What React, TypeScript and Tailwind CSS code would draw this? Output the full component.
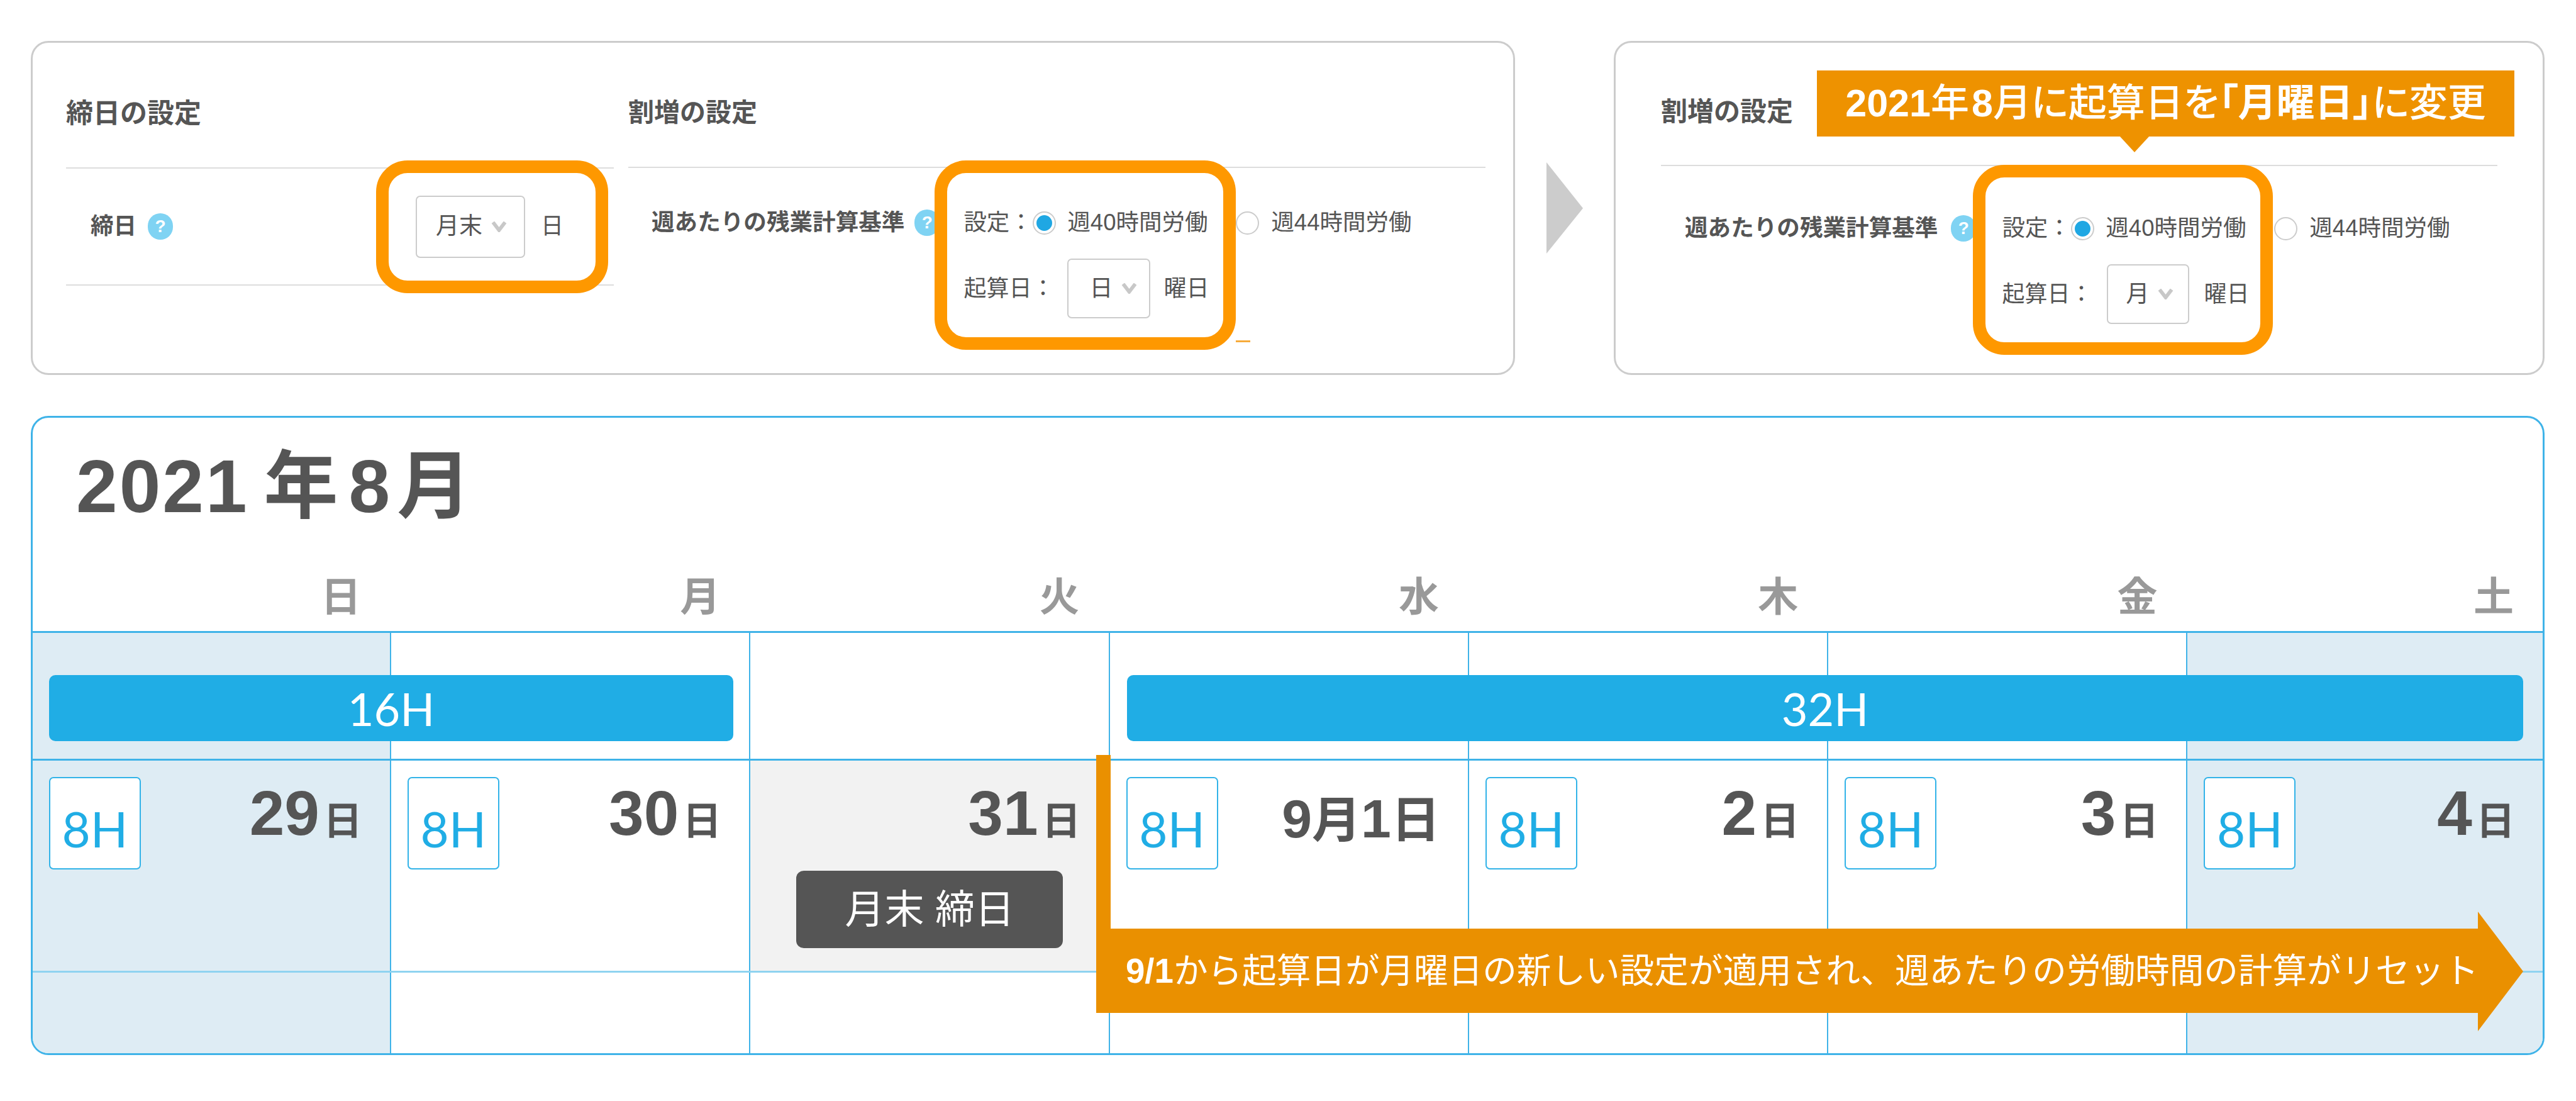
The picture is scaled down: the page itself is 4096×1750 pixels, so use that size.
const FONT = '[font-family:"Liberation_Sans","Noto_Sans_CJK_JP",sans-serif]';

function Help() {
  return (
    <span className="flex h-[42px] w-[40px] shrink-0 items-center justify-center rounded-full bg-[#7fd3f3] text-[28px] font-bold text-white">
      ?
    </span>
  );
}

function Chevron({ className }: { className: string }) {
  return (
    <svg viewBox="0 0 26 17" className={className} fill="none" stroke="#c8c8c8" strokeWidth="6">
      <path d="M3 1 L13 14 L23 1" />
    </svg>
  );
}

function Select({ label, className }: { label: string; className: string }) {
  return (
    <div className={`flex shrink-0 items-center rounded-[7px] border-2 border-[#cccccc] bg-white text-[37px] text-[#555] ${className}`}>
      <span>{label}</span>
      <Chevron className="ml-[14px] h-[17px] w-[25px]" />
    </div>
  );
}

function Radio({ on, className = '' }: { on?: boolean; className?: string }) {
  return (
    <span className={`flex h-[37px] w-[37px] shrink-0 items-center justify-center rounded-full border-2 border-[#cccccc] bg-white ${className}`}>
      {on && <span className="h-[25px] w-[25px] rounded-full bg-[#1fa7e3]" />}
    </span>
  );
}

function Highlight({ className }: { className: string }) {
  return <div className={`absolute rounded-[50px] border-[20px] border-[#fe9800] ${className}`} />;
}

function Overtime({ month, helpGap, labelGap, selectGap, selectClass, afterGap }: { month: string; helpGap: string; labelGap: string; selectGap: string; selectClass: string; afterGap: string }) {
  return (
    <div className="flex">
      <div className="flex h-[38px] items-center">
        <span className="text-[36.6px] font-bold text-[#555]">週あたりの残業計算基準</span>
        <span className={helpGap}><Help /></span>
      </div>
      <div className={labelGap}>
        <div className="flex h-[38px] items-center text-[36.5px] text-[#555]">
          <span className="w-[110px]">設定：</span>
          <Radio on />
          <span className="ml-[18px] w-[268px]">週40時間労働</span>
          <Radio />
          <span className="ml-[19px]">週44時間労働</span>
        </div>
        <div className="mt-[38px] flex items-center text-[36px] text-[#555]">
          <span className={selectGap}>起算日：</span>
          <Select label={month} className={selectClass} />
          <span className={afterGap}>曜日</span>
        </div>
      </div>
    </div>
  );
}

function LeftPanel() {
  return (
    <div className="relative flex h-[531px] w-[2360px] shrink-0 rounded-[28px] border-[3px] border-[#cccccc] pl-[53px]">
      <div className="w-[871px]">
        <div className="flex h-[200px] items-center border-b-2 border-[#dddddd] pt-[27px] text-[43px] font-bold text-[#555]">締日の設定</div>
        <div className="flex h-[186px] items-center border-b-2 border-[#dddddd] pl-[39px]">
          <span className="text-[36.5px] font-bold text-[#555]">締日</span>
          <span className="ml-[18px]"><Help /></span>
          <Select label="月末" className="ml-[386px] h-[99px] w-[174px] pl-[30px]" />
          <span className="ml-[25px] text-[36px] text-[#555]">日</span>
        </div>
      </div>
      <div className="ml-[23px] w-[1363px]">
        <div className="flex h-[199px] items-center border-b-2 border-[#dddddd] pt-[27px] text-[41px] font-bold text-[#555]">割増の設定</div>
        <div className="pl-[37px] pt-[68px]">
          <Overtime month="日" helpGap="ml-[16px]" labelGap="ml-[38px]" selectGap="w-[165px]" selectClass="h-[95px] w-[132px] pl-[33px]" afterGap="ml-[21px]" />
        </div>
      </div>
      <Highlight className="left-[1434px] top-[187px] h-[301px] w-[479px]" />
      <div className="absolute left-[1913px] top-[473px] h-[3px] w-[23px] bg-[#f7ab3a]" />
      <Highlight className="left-[546px] top-[187px] h-[211px] w-[369px]" />
    </div>
  );
}

function RightPanel() {
  return (
    <div className="relative h-[531px] w-[1480px] shrink-0 rounded-[28px] border-[3px] border-[#cccccc] px-[72px]">
      <div className="flex h-[196px] items-center border-b-2 border-[#dddddd] pt-[24px] text-[42px] font-bold text-[#555]">割増の設定</div>
      <div className="pl-[38px] pt-[80px]">
        <Overtime month="月" helpGap="ml-[21px]" labelGap="ml-[41px]" selectGap="w-[167px]" selectClass="h-[95px] w-[131px] pl-[28px]" afterGap="ml-[23px]" />
      </div>
      <div className="absolute left-[320px] top-[44px] flex h-[105px] w-[1109px] items-center justify-center bg-[#ee9200] text-[61px] font-medium text-white [font-feature-settings:'palt']">
        <b className="font-bold">2021</b>年<b className="ml-[4px] font-bold">8</b>月に起算日を<b className="font-bold">「月曜日」</b>に変更
      </div>
      <svg viewBox="0 0 48 26" className="absolute left-[801px] top-[148px] h-[26px] w-[48px]">
        <path d="M0 0 H48 L24 26 Z" fill="#ee9200" />
      </svg>
      <Highlight className="left-[568px] top-[194px] h-[302px] w-[477px]" />
    </div>
  );
}

const DAYS = [
  { n: '29', bg: 'bg-[#deecf4]' },
  { n: '30', bg: 'bg-white' },
  { n: '31', bg: 'bg-[#f2f2f2]' },
  { n: '', bg: 'bg-white' },
  { n: '2', bg: 'bg-white' },
  { n: '3', bg: 'bg-white' },
  { n: '4', bg: 'bg-[#deecf4]' },
];
const WEEK = ['日', '月', '火', '水', '木', '金', '土'];
const COLS = 'grid grid-cols-[568px_repeat(5,571.3px)_1fr]';

function Cell({ i, bg, children, className = '' }: { i: number; bg: string; children?: React.ReactNode; className?: string }) {
  return <div className={`h-full ${i > 0 ? 'border-l-2 border-[#3fb3e8]' : ''} ${bg} ${className}`}>{children}</div>;
}

function Calendar() {
  return (
    <div className="relative mt-[65px] h-[1016px] w-[3997px] overflow-hidden rounded-[28px] border-[3px] border-[#3fb3e8]">
      <div className="h-[339px]">
        <div className="flex h-[190px] items-center pl-[69px] pt-[28px] text-[118px] font-bold tracking-[3px] text-[#555]">
          <span>2021</span>
          <span className="ml-[24px]">年</span>
          <span className="ml-[14px]">8</span>
          <span className="ml-[8px]">月</span>
        </div>
        <div className={`${COLS} h-[149px]`}>
          {WEEK.map((w) => (
            <div key={w} className="flex items-start justify-end pr-[46px] pt-[55px] text-[64px] font-bold leading-[80px] text-[#999]">{w}</div>
          ))}
        </div>
      </div>

      <div className={`${COLS} relative h-[203px] border-t-[3px] border-[#3fb3e8]`}>
        {DAYS.map((d, i) => (
          <Cell key={i} i={i} bg={i === 0 || i === 6 ? 'bg-[#deecf4]' : 'bg-white'} />
        ))}
        <div className="absolute left-[26px] top-[67px] flex h-[105px] w-[1088px] items-center justify-center rounded-[10px] bg-[#20ade5] text-[72px] text-white [font-family:Lato,sans-serif]">16H</div>
        <div className="absolute left-[1740px] top-[67px] flex h-[105px] w-[2220px] items-center justify-center rounded-[10px] bg-[#20ade5] text-[72px] text-white [font-family:Lato,sans-serif]">32H</div>
      </div>

      <div className={`${COLS} h-[337px] border-t-[3px] border-[#3fb3e8]`}>
        {DAYS.map((d, i) => (
          <Cell key={i} i={i} bg={d.bg} className="relative flex items-start justify-between pl-[26px] pr-[44px] pt-[26px]">
            {i === 2 ? (
              <span />
            ) : (
              <div className="flex h-[147px] w-[146px] shrink-0 items-center justify-center rounded-[7px] border-2 border-[#32b3e8] bg-white pt-[18px] text-[78px] text-[#20ade5] [font-family:Lato,sans-serif]">8H</div>
            )}
            {d.n ? (
              <div className="flex items-baseline pt-[2px] font-bold leading-[110px] text-[#555]">
                <span className="text-[100px]">{d.n}</span>
                <span className="ml-[6px] text-[62px]">日</span>
              </div>
            ) : (
              <div className="flex items-baseline pt-[16px] font-bold leading-[100px] text-[#555]">
                <span className="text-[86px]">9</span>
                <span className="text-[78px]">月</span>
                <span className="text-[86px]">1</span>
                <span className="text-[78px]">日</span>
              </div>
            )}
            {i === 2 && (
              <div className="absolute left-[73px] top-[175px] flex h-[123px] w-[424px] items-center justify-center rounded-[12px] bg-[#555] text-[63px] text-white">月末 締日</div>
            )}
          </Cell>
        ))}
      </div>

      <div className={`${COLS} h-[131px] border-t-[3px] border-[#8fd3f0]`}>
        {DAYS.map((d, i) => (
          <Cell key={i} i={i} bg={i === 0 || i === 6 ? 'bg-[#deecf4]' : 'bg-white'} />
        ))}
      </div>

      <div className="absolute left-[1691px] top-[536px] h-[276px] w-[23px] bg-[#ea9000]" />
      <div className="absolute left-[1691px] top-[785px] flex h-[190px] w-[2269px] items-center bg-[#ea9000] pl-[47px] text-[54.6px] text-white [clip-path:polygon(0_27px,2197px_27px,2197px_0,100%_95px,2197px_190px,2197px_161px,0_161px)]">
        <b className="font-bold">9/1</b>から起算日が月曜日の新しい設定が適用され、週あたりの労働時間の計算がリセット
      </div>
    </div>
  );
}

export default function App() {
  return (
    <div className={`h-[1750px] w-[4096px] overflow-hidden bg-white pl-[49px] pt-[65px] ${FONT}`}>
      <div className="flex">
        <LeftPanel />
        <div className="flex h-[531px] w-[157px] shrink-0 items-start pl-[50px] pt-[193px]">
          <svg viewBox="0 0 58 145" className="h-[145px] w-[58px]">
            <path d="M0 0 L58 73 L0 145 Z" fill="#cccccc" />
          </svg>
        </div>
        <RightPanel />
      </div>
      <Calendar />
    </div>
  );
}
